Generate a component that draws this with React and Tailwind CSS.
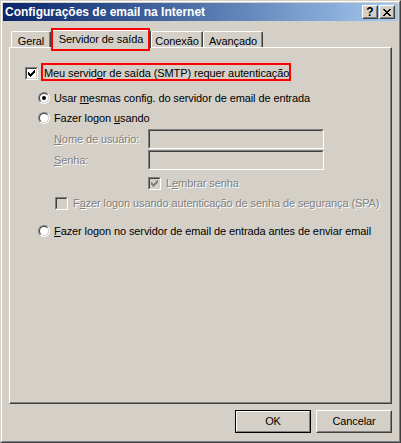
import React from 'react';

// Win2000 classic dialog: "Configurações de email na Internet"

const DIS = 'text-[#808080] [text-shadow:1px_1px_0_#fff]';

function CheckGlyph({ color }) {
  return (
    <svg width="7" height="7" viewBox="0 0 7 7" shapeRendering="crispEdges" className="block">
      <path
        fill={color}
        d="M6 0h1v1H6zM5 1h2v1H5zM0 2h1v1H0zM4 2h3v1H4zM0 3h2v1H0zM3 3h3v1H3zM0 4h5v1H0zM1 5h3v1H1zM2 6h1v1H2z"
      />
    </svg>
  );
}

function Checkbox({ checked, disabled }) {
  return (
    <div className="w-[13px] h-[13px] shrink-0 border border-t-[#808080] border-l-[#808080] border-r-white border-b-white">
      <div
        className={`w-full h-full flex items-center justify-center border border-t-[#404040] border-l-[#404040] border-r-[#d4d0c8] border-b-[#d4d0c8] ${
          disabled ? 'bg-[#d4d0c8]' : 'bg-white'
        }`}
      >
        {checked && <CheckGlyph color={disabled ? '#808080' : '#000'} />}
      </div>
    </div>
  );
}

function Radio({ checked }) {
  return (
    <div className="w-[12px] h-[12px] shrink-0 rounded-full border border-t-[#808080] border-l-[#808080] border-r-white border-b-white">
      <div className="w-full h-full rounded-full flex items-center justify-center bg-white border border-t-[#404040] border-l-[#404040] border-r-[#d4d0c8] border-b-[#d4d0c8]">
        {checked && <div className="w-[4px] h-[4px] rounded-full bg-black" />}
      </div>
    </div>
  );
}

function Field() {
  return (
    <div className="w-[176px] h-[20px] border border-t-[#808080] border-l-[#808080] border-r-white border-b-white">
      <div className="w-full h-full bg-[#d4d0c8] border border-t-[#404040] border-l-[#404040] border-r-[#d4d0c8] border-b-[#d4d0c8]" />
    </div>
  );
}

function CaptionButton({ children }) {
  return (
    <div className="w-[16px] h-[14px] bg-[#d4d0c8] border border-t-white border-l-white border-r-[#404040] border-b-[#404040]">
      <div className="w-full h-full flex items-center justify-center border border-t-[#d4d0c8] border-l-[#d4d0c8] border-r-[#808080] border-b-[#808080]">
        {children}
      </div>
    </div>
  );
}

function Tab({ width, children }) {
  return (
    <div
      className={`${width} h-[16px] pt-[3px] text-center leading-[13px] rounded-t-[2px] border-t border-l border-r border-t-white border-l-white border-r-[#404040] shadow-[inset_-1px_0_0_#808080]`}
    >
      {children}
    </div>
  );
}

export default function App() {
  return (
    <div className="w-[401px] h-[443px] bg-[#d4d0c8] text-black text-[11px] tracking-[-0.1px] [font-family:'Liberation_Sans',Arial,sans-serif] border border-t-[#d4d0c8] border-l-[#d4d0c8] border-r-[#404040] border-b-[#404040]">
      <div className="h-full p-[1px] border border-t-white border-l-white border-r-[#808080] border-b-[#808080]">
        {/* title bar */}
        <div className="h-[18px] flex items-center pl-[2px] pr-[3px] bg-linear-to-r from-[#0a246a] to-[#a6caf0]">
          <span className="flex-1 text-white font-bold text-[12px] leading-[18px] tracking-normal">
            Configurações de email na Internet
          </span>
          <div className="flex gap-[1px]">
            <CaptionButton>
              <span className="font-bold text-[12px] leading-none tracking-normal">?</span>
            </CaptionButton>
            <CaptionButton>
              <svg width="8" height="7" viewBox="0 0 8 7" shapeRendering="crispEdges" className="block">
                <path
                  fill="#000"
                  d="M0 0h2v1H0zM6 0h2v1H6zM1 1h2v1H1zM5 1h2v1H5zM2 2h4v1H2zM3 3h2v1H3zM2 4h4v1H2zM1 5h2v1H1zM5 5h2v1H5zM0 6h2v1H0zM6 6h2v1H6z"
                />
              </svg>
            </CaptionButton>
          </div>
        </div>

        <div className="px-[6px]">
          {/* tabs */}
          <div className="h-[26px] flex items-end pl-[2px]">
            <Tab width="w-[40px]">Geral</Tab>
            <div className="relative z-10 w-[100px] h-[18px] -mb-[1px] pt-[2px] text-center leading-[13px] bg-[#d4d0c8] rounded-t-[2px] border-t border-l border-r border-t-white border-l-white border-r-[#404040] shadow-[inset_-1px_0_0_#808080]">
              Servidor de saída
              <div className="absolute left-[-1px] top-[-3px] w-[99px] h-[23px] border-2 border-[#ff0000]" />
            </div>
            <Tab width="w-[52px]">Conexão</Tab>
            <Tab width="w-[60px]">Avançado</Tab>
          </div>

          {/* panel */}
          <div className="h-[357px] flex flex-col items-start border border-t-white border-l-white border-r-[#404040] border-b-[#404040] shadow-[inset_-1px_-1px_0_#808080]">
            <div className="mt-[19px] ml-[15px] h-[13px] flex items-start gap-[6px]">
              <Checkbox checked />
              <span className="relative leading-[13px]">
                Meu servid<u>o</u>r de saída (SMTP) requer autenticação
                <span className="absolute left-[-3px] right-[-2px] top-[-4px] bottom-[-1px] border-2 border-[#ff0000]" />
              </span>
            </div>

            <div className="mt-[12px] ml-[28px] h-[13px] flex items-start gap-[4px]">
              <Radio checked />
              <span className="leading-[13px]">
                Usar <u>m</u>esmas config. do servidor de email de entrada
              </span>
            </div>

            <div className="mt-[7px] ml-[28px] h-[13px] flex items-start gap-[4px]">
              <Radio />
              <span className="leading-[13px]">
                Fazer logon <u>u</u>sando
              </span>
            </div>

            <div className="mt-[4px] ml-[44px] flex items-center">
              <span className={`w-[94px] leading-[13px] ${DIS}`}>
                <u>N</u>ome de usuário:
              </span>
              <Field />
            </div>

            <div className="mt-[1px] ml-[44px] flex items-center">
              <span className={`w-[94px] leading-[13px] ${DIS}`}>
                <u>S</u>enha:
              </span>
              <Field />
            </div>

            <div className="mt-[7px] ml-[138px] h-[13px] flex items-start gap-[5px]">
              <Checkbox checked disabled />
              <span className={`leading-[13px] ${DIS}`}>
                L<u>e</u>mbrar senha
              </span>
            </div>

            <div className="mt-[7px] ml-[45px] h-[13px] flex items-start gap-[5px]">
              <Checkbox disabled />
              <span className={`leading-[13px] ${DIS}`}>
                F<u>a</u>zer logon usando autenticação de senha de segurança (SPA)
              </span>
            </div>

            <div className="mt-[15px] ml-[28px] h-[13px] flex items-start gap-[4px]">
              <Radio />
              <span className="leading-[13px]">
                <u>F</u>azer logon no servidor de email de entrada antes de enviar email
              </span>
            </div>
          </div>
        </div>

        {/* buttons */}
        <div className="mt-[6px] pr-[6px] flex justify-end gap-[5px]">
          <div className="w-[76px] h-[23px] border border-black">
            <div className="w-full h-full flex items-center justify-center border border-t-white border-l-white border-r-[#808080] border-b-[#808080]">
              OK
            </div>
          </div>
          <div className="w-[76px] h-[23px] border border-t-white border-l-white border-r-[#404040] border-b-[#404040]">
            <div className="w-full h-full flex items-center justify-center border border-t-[#d4d0c8] border-l-[#d4d0c8] border-r-[#808080] border-b-[#808080]">
              Cancelar
            </div>
          </div>
        </div>
      </div>
    </div>
  );
}
